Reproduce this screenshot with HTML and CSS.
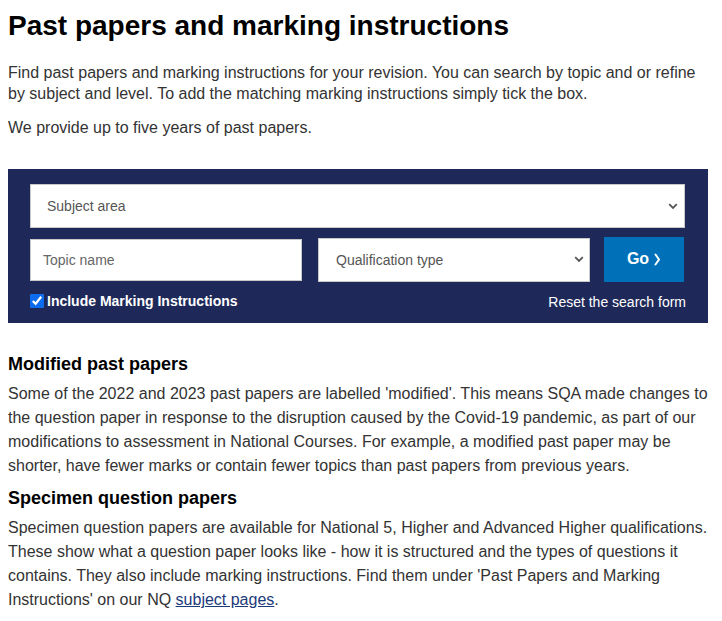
FILE: index.html
```html
<!DOCTYPE html>
<html lang="en">
<head>
<meta charset="utf-8">
<title>Past papers and marking instructions</title>
<link rel="stylesheet" href="styles.css">
</head>
<body>
<main class="page">
  <h1 class="title">Past papers and marking instructions</h1>
  <p class="intro">Find past papers and marking instructions for your revision. You can search by topic and or refine by subject and level. To add the matching marking instructions simply tick the box.</p>
  <p class="intro">We provide up to five years of past papers.</p>

  <form class="search">
    <select class="field select subject">
      <option>Subject area</option>
    </select>
    <div class="row">
      <input class="field topic" type="text" placeholder="Topic name">
      <select class="field select qual">
        <option>Qualification type</option>
      </select>
      <button class="go" type="button">Go <svg class="chev" width="7" height="13" viewBox="0 0 7 13"><path d="M1.5 1.5 L5 6.5 L1.5 11.5" fill="none" stroke="#fff" stroke-width="2" stroke-linecap="round" stroke-linejoin="round"/></svg></button>
    </div>
    <div class="row2">
      <label class="check"><input type="checkbox" checked> Include Marking Instructions</label>
      <a class="reset" href="#">Reset the search form</a>
    </div>
  </form>

  <h2 class="sub">Modified past papers</h2>
  <p class="body">Some of the 2022 and 2023 past papers are labelled 'modified'. This means SQA made changes to the question paper in response to the disruption caused by the Covid-19 pandemic, as part of our modifications to assessment in National Courses. For example, a modified past paper may be shorter, have fewer marks or contain fewer topics than past papers from previous years.</p>
  <h2 class="sub">Specimen question papers</h2>
  <p class="body">Specimen question papers are available for National 5, Higher and Advanced Higher qualifications. These show what a question paper looks like - how it is structured and the types of questions it contains. They also include marking instructions. Find them under 'Past Papers and Marking Instructions' on our NQ <a class="link" href="#">subject pages</a>.</p>
</main>
</body>
</html>
```

FILE: styles.css
```css
html, body {
  margin: 0;
  padding: 0;
  background: #fff;
}
body {
  font-family: "Liberation Sans", Arial, sans-serif;
  color: #333;
}
.page {
  width: 700px;
  padding: 9px 8px 0 8px;
}
.title {
  margin: 0 0 19px 0;
  font-size: 28px;
  line-height: 34px;
  font-weight: bold;
  color: #000;
}
.intro {
  margin: 0 0 13px 0;
  font-size: 16px;
  line-height: 21px;
}
.search {
  margin: 31px 0 0 0;
  background: #1e2959;
  padding: 15px 23px 13px 22px;
}
.field {
  box-sizing: border-box;
  display: block;
  background: #fff;
  border: 1px solid #c8c8c8;
  border-radius: 0;
  font-family: "Liberation Sans", Arial, sans-serif;
  font-size: 14px;
  color: #555;
  margin: 0;
  outline: none;
}
.select {
  -webkit-appearance: none;
  appearance: none;
  background-image: url("data:image/svg+xml,%3Csvg xmlns='http://www.w3.org/2000/svg' width='10' height='7' viewBox='0 0 10 7'%3E%3Cpath d='M1.2 1.2 L5 5 L8.8 1.2' fill='none' stroke='%23555' stroke-width='1.8'/%3E%3C/svg%3E");
  background-repeat: no-repeat;
}
.subject {
  width: 655px;
  height: 44px;
  padding: 0 0 0 16px;
  background-position: right 6px center;
}
.row {
  display: flex;
  align-items: center;
  margin-top: 9px;
}
.topic {
  width: 272px;
  height: 42px;
  padding: 0 12px;
}
.topic::placeholder {
  color: #666;
}
.qual {
  width: 272px;
  height: 44px;
  margin-left: 16px;
  padding: 0 0 0 17px;
  background-position: right 5px center;
}
.go {
  width: 80px;
  height: 45px;
  margin-left: 14px;
  background: #0071b9;
  border: none;
  color: #fff;
  font-family: "Liberation Sans", Arial, sans-serif;
  font-weight: bold;
  font-size: 16px;
  display: flex;
  align-items: center;
  justify-content: center;
  gap: 5px;
  padding: 0 0 2px 0;
}
.chev {
  display: block;
  margin-top: 1px;
}
.row2 {
  display: flex;
  justify-content: space-between;
  align-items: center;
  margin-top: 9px;
  margin-right: -1px;
}
.check {
  display: flex;
  align-items: center;
  color: #fff;
  font-weight: bold;
  font-size: 14px;
  gap: 3px;
}
.check input {
  width: 14px;
  height: 14px;
  margin: 0;
  accent-color: #0b6cf0;
}
.reset {
  color: #fff;
  font-size: 14px;
  text-decoration: none;
  padding-top: 3px;
}
.sub {
  margin: 30px 0 7px 0;
  font-size: 18px;
  line-height: 22px;
  font-weight: bold;
  color: #000;
}
.body + .sub {
  margin-top: 9px;
}
.body {
  margin: 0;
  font-size: 16px;
  line-height: 24px;
}
.link {
  color: #1c3a7a;
  text-decoration: underline;
}
```
